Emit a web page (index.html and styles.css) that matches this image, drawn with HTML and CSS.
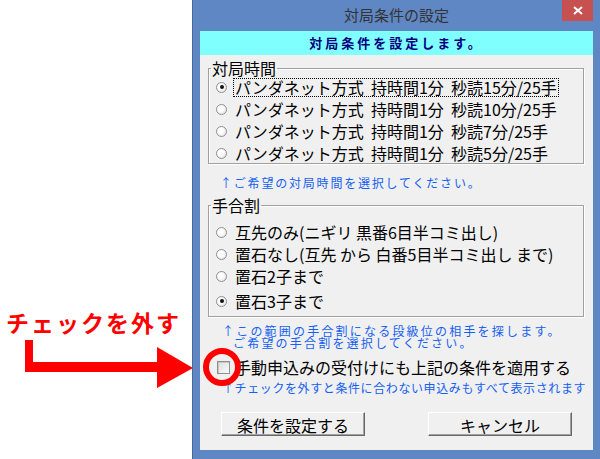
FILE: index.html
```html
<!DOCTYPE html>
<html lang="ja">
<head>
    <meta charset="UTF-8">
    <meta name="viewport" content="width=device-width, initial-scale=1.0">
    <title>対局条件の設定</title>
    <link rel="stylesheet" href="styles.css">
</head>
<body>
    <div class="stage">
        <div class="note">チェックを外す</div>
        <svg class="marks" width="600" height="459" viewBox="0 0 600 459">
            <path d="M25 340 H33 V362 H157 V347 L193 368 L157 388 V372 H25 Z" fill="#ff0000"/>
            <circle cx="222" cy="367" r="16" fill="none" stroke="#ff0000" stroke-width="6"/>
        </svg>

        <div class="window">
            <div class="titlebar">
                <span class="title">対局条件の設定</span>
                <span class="close">
                    <svg width="10" height="9" viewBox="0 0 10 9">
                        <path d="M1 1 L9 8 M9 1 L1 8" stroke="#fff" stroke-width="2"/>
                    </svg>
                </span>
            </div>

            <div class="client">
                <div class="banner">対局条件を設定します。</div>

                <fieldset class="group time">
                    <legend>対局時間</legend>
                    <div class="opts">
                        <label class="opt"><span class="radio on"></span><span class="text focus">パンダネット方式&nbsp; 持時間1分&nbsp; 秒読15分/25手</span></label>
                        <label class="opt"><span class="radio"></span><span class="text">パンダネット方式&nbsp; 持時間1分&nbsp; 秒読10分/25手</span></label>
                        <label class="opt"><span class="radio"></span><span class="text">パンダネット方式&nbsp; 持時間1分&nbsp; 秒読7分/25手</span></label>
                        <label class="opt"><span class="radio"></span><span class="text">パンダネット方式&nbsp; 持時間1分&nbsp; 秒読5分/25手</span></label>
                    </div>
                </fieldset>

                <p class="hint first">↑ご希望の対局時間を選択してください。</p>

                <fieldset class="group handicap">
                    <legend>手合割</legend>
                    <div class="opts">
                        <label class="opt"><span class="radio"></span><span class="text">互先のみ(ニギリ 黒番6目半コミ出し)</span></label>
                        <label class="opt"><span class="radio"></span><span class="text">置石なし(互先 から 白番5目半コミ出し まで)</span></label>
                        <label class="opt"><span class="radio"></span><span class="text">置石2子まで</span></label>
                        <label class="opt last"><span class="radio on"></span><span class="text">置石3子まで</span></label>
                    </div>
                </fieldset>

                <p class="hint second">↑この範囲の手合割になる段級位の相手を探します。<br><span class="indent">ご希望の手合割を選択してください。</span></p>

                <label class="check"><span class="box"></span>手動申込みの受付けにも上記の条件を適用する</label>

                <p class="hint third">↑チェックを外すと条件に合わない申込みもすべて表示されます</p>

                <div class="buttons">
                    <button>条件を設定する</button>
                    <button>キャンセル</button>
                </div>
            </div>
        </div>
    </div>
</body>
</html>
```

FILE: styles.css
```css
body {
    margin: 0;
    background: #fff;
    font-family: "Noto Sans CJK JP", "Noto Sans", sans-serif;
}
.stage {
    position: relative;
    width: 600px;
    height: 459px;
    overflow: hidden;
}
.note {
    position: absolute;
    left: 6px;
    top: 307px;
    color: #ff0000;
    font-size: 23px;
    font-weight: bold;
    letter-spacing: 2px;
    line-height: 30px;
    z-index: 2;
}
.marks {
    position: absolute;
    left: 0;
    top: 0;
    z-index: 2;
    pointer-events: none;
}
.window {
    margin-left: 192px;
    width: 393px;
    height: 450px;
    padding: 0 7px 9px 7px;
    border-left: 1px solid #46699f;
    background: #5f87c4;
}
.titlebar {
    display: grid;
    grid-template-columns: 1fr auto 1fr;
    height: 31px;
}
.title {
    grid-column: 2;
    line-height: 30px;
    font-size: 15px;
    color: #333;
}
.close {
    grid-column: 3;
    justify-self: end;
    width: 31px;
    height: 21px;
    background: #c75050;
    display: flex;
    align-items: center;
    justify-content: center;
}
.client {
    height: 419px;
    background: #f0f0f0;
    overflow: hidden;
}
.banner {
    height: 24px;
    line-height: 24px;
    background: #80ffff;
    color: #000080;
    font-size: 13px;
    font-weight: bold;
    letter-spacing: 3px;
    text-align: center;
}
.group {
    margin: 4px 9px 0 8px;
    padding: 1px 0 1px 7px;
    border: 1px solid #a0a0a0;
    box-shadow: inset 1px 1px #fff, 1px 1px #fff;
}
.group legend {
    margin-left: -5px;
    padding: 0 1px;
    font-size: 16px;
    line-height: 18px;
    color: #000;
}
.opts {
    display: flex;
    flex-direction: column;
    gap: 4px;
}
.handicap {
    margin-top: 6px;
    padding-top: 9px;
    padding-bottom: 6px;
}
.handicap .opt.last {
    margin-top: 3px;
}
.opt {
    display: flex;
    align-items: center;
    height: 18px;
    font-size: 16px;
    color: #000;
}
.radio {
    position: relative;
    width: 11px;
    height: 11px;
    box-sizing: border-box;
    border: 1px solid #8e8f8f;
    border-radius: 50%;
    background: radial-gradient(circle at 40% 40%, #fff 30%, #dcdcdc 100%);
    margin-right: 6px;
}
.radio.on::after {
    content: "";
    position: absolute;
    left: 2.5px;
    top: 2.5px;
    width: 4px;
    height: 4px;
    border-radius: 50%;
    background: #111;
}
.text {
    padding: 0 1px;
    border: 1px dotted transparent;
    line-height: 17px;
    white-space: nowrap;
}
.text.focus {
    border-color: #000;
}
.hint {
    margin: 0;
    color: #1560f0;
    font-size: 12px;
    white-space: nowrap;
}
.hint.first {
    margin-top: 11px;
    padding-left: 20px;
    line-height: 15px;
    letter-spacing: 1.8px;
}
.hint.second {
    margin-top: 8px;
    padding-left: 22px;
    line-height: 12px;
    letter-spacing: 2.2px;
}
.hint .indent {
    padding-left: 11px;
}
.check {
    display: flex;
    align-items: center;
    height: 18px;
    margin-top: 9px;
    padding-left: 17px;
    font-size: 16px;
    color: #000;
}
.box {
    width: 13px;
    height: 13px;
    box-sizing: border-box;
    border: 1px solid #8e8f8f;
    background: linear-gradient(135deg, #dcdcdc, #fbfbfb);
    box-shadow: inset 1px 1px #c8c8c8;
    margin-right: 5px;
}
.hint.third {
    margin-top: 5px;
    padding-left: 22px;
    line-height: 14px;
    letter-spacing: 0.6px;
}
.buttons {
    display: flex;
    justify-content: space-between;
    margin: 17px 21px 0 21px;
}
.buttons button {
    width: 144px;
    height: 24px;
    padding: 0;
    font-family: "Noto Sans CJK JP", "Noto Sans", sans-serif;
    font-size: 16px;
    color: #000;
    background: #f0f0f0;
    border: 1px solid;
    border-color: #fff #696969 #696969 #fff;
    box-shadow: inset -1px -1px #a0a0a0;
}
```
